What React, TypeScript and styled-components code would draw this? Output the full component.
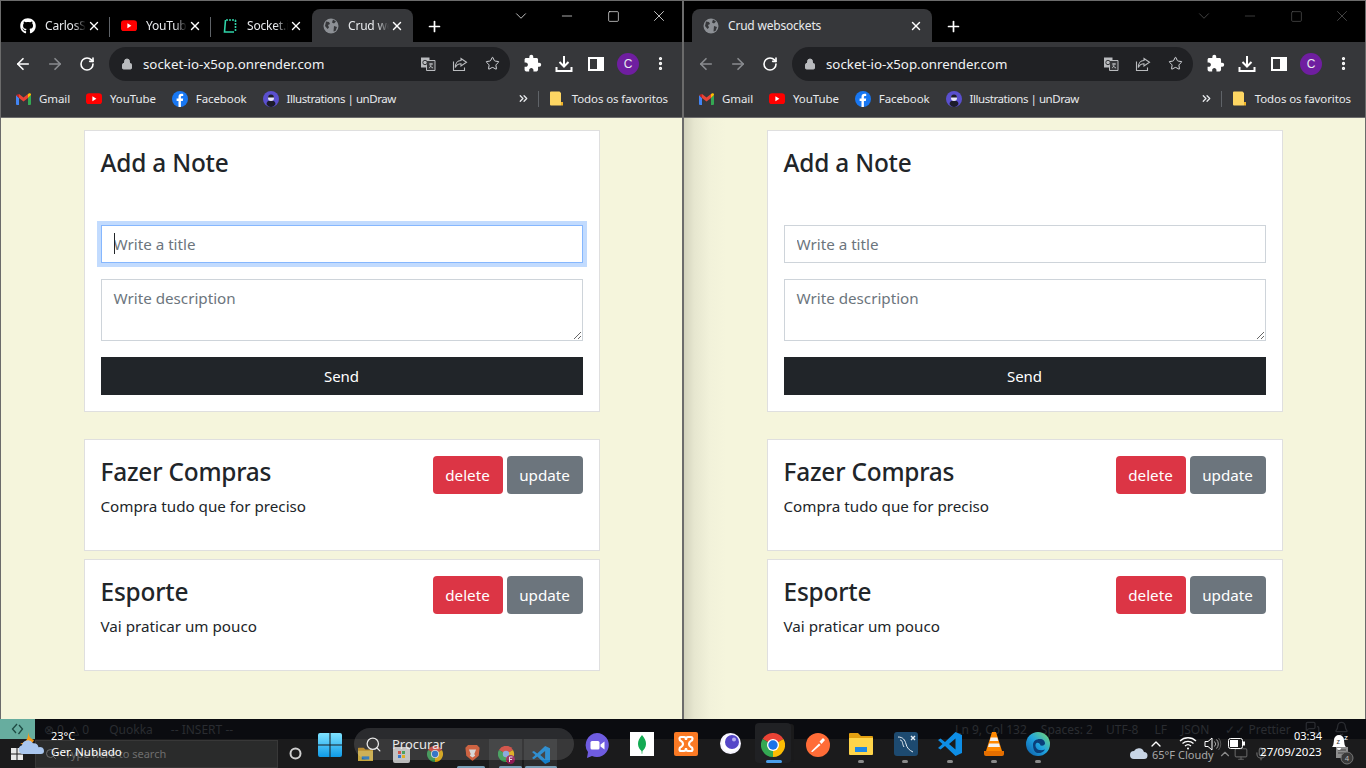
import React from "react";
import styled, { createGlobalStyle } from "styled-components";
import { FaGithub } from "react-icons/fa";
import { MdExtension } from "react-icons/md";
import { Star, Lock, ArrowLeft, ArrowRight, RotateCw, Plus, X, Minus, Square, ChevronDown, EllipsisVertical, ChevronsRight, Search, ChevronUp, Bell as BellLine, MessagesSquare, Mic, Monitor } from "lucide-react";

const UI = `"Noto Sans", "Open Sans", "Liberation Sans", sans-serif`;

const Global = createGlobalStyle`
  html, body { margin: 0; padding: 0; width: 1366px; height: 768px; overflow: hidden; background: #000; font-family: ${UI}; }
  * { box-sizing: border-box; }
`;

const Page = styled.div`display: flex; flex-direction: column; width: 1366px; height: 768px;`;
const Windows = styled.div`display: grid; grid-template-columns: 683px 683px; height: 719px;`;
const Win = styled.section`display: flex; flex-direction: column; border: 1px solid #6b6b6b; border-bottom: 0; min-width: 0;`;

const TabStrip = styled.div`display: flex; align-items: flex-end; height: 41px; padding-left: 8px; background: #000; position: relative;`;
const Tab = styled.div<{ $active?: boolean; $w: number; $sep?: boolean }>`
  position: relative; display: flex; align-items: center; width: ${p => p.$w}px; height: 33px; padding-left: 11px; color: #e8eaed;
  background: ${p => p.$active ? "#36373a" : "transparent"}; border-radius: 8px 8px 0 0; font-size: 12px;
  ${p => p.$sep ? `&::after { content: ""; position: absolute; right: 0; top: 8px; height: 20px; width: 1px; background: #5f6368; }` : ""}
`;
const Fav = styled.span`display: flex; width: 16px; height: 16px; flex: none; align-items: center; justify-content: center;`;
const TabTitle = styled.span`flex: 1; margin-left: 9px; overflow: hidden; white-space: nowrap; letter-spacing: -0.2px;
  ${(p: { $fade?: boolean }) => p.$fade ? "-webkit-mask-image: linear-gradient(90deg,#000 70%,transparent 100%);" : ""}`;
const TabClose = styled.span`display: flex; width: 16px; margin-right: 8px; justify-content: center; color: #fff;`;
const NewTab = styled.span`display: flex; align-self: center; margin: 9px 0 0 13px; color: #fff;`;
const Controls = styled.div<{ $dim?: boolean }>`
  position: absolute; top: 0; right: 0; display: flex; height: 30px; color: ${p => p.$dim ? "#585858" : "#fff"};
`;
const Ctl = styled.span`display: flex; width: 46px; height: 30px; align-items: center; justify-content: center;`;

const Toolbar = styled.div`display: flex; align-items: center; height: 43px; padding: 0 6px; background: #36373a;`;
const Btn = styled.span<{ $c?: string }>`display: flex; flex: none; width: 32px; height: 32px; align-items: center; justify-content: center; color: ${p => p.$c || "#fff"};`;
const Omni = styled.div`display: flex; align-items: center; flex: none; width: 401px; height: 34px; margin: 0 6px 0 6px; padding: 0 2px 0 12px; border-radius: 17px; background: #202124;`;
const Url = styled.span`flex: 1; margin-left: 10px; font-size: 13.3px; color: #f1f3f4; white-space: nowrap;`;
const Avatar = styled.span`display: flex; width: 22px; height: 22px; border-radius: 50%; align-items: center; justify-content: center; background: #6f1ea0; color: #e8eaed; font: 12px "Liberation Sans", sans-serif;`;

const Bookmarks = styled.div`display: flex; align-items: center; height: 33px; padding: 0 14px 5px 15px; background: #36373a; border-bottom: 1px solid #6b6b6b; font-size: 11.5px; color: #e8eaed; letter-spacing: -0.1px;`;
const Bm = styled.span<{ $gap?: number; $mr?: number; $ls?: number }>`display: flex; align-items: center; gap: ${p => p.$gap ?? 8}px; margin-right: ${p => p.$mr ?? 16}px; white-space: nowrap;
  ${p => p.$ls !== undefined ? `letter-spacing: ${p.$ls}px;` : ""}`;
const BmRight = styled.span`display: flex; align-items: center; margin-left: auto;`;
const BmSep = styled.span`width: 1px; height: 16px; margin: 0 11px 0 8px; background: #5f6368;`;

const Content = styled.main<{ $shade?: boolean }>`
  flex: 1; padding-top: 12px; 
  background: ${p => p.$shade ? "linear-gradient(90deg,#d2d2bc 0,#e6e6cf 10px,#f2f2da 26px,#f5f5dc 42px)" : "#f5f5dc"};
`;
const Column = styled.div`width: 516px; margin: 0 auto;`;
const Card = styled.div<{ $mb?: number }>`background: #fff; border: 1px solid #dfdfdf; padding: 16px; margin-bottom: ${p => p.$mb ?? 8}px; color: #212529;`;
const H = styled.h3<{ $mb?: number }>`margin: 0 0 ${p => p.$mb ?? 0}px; font: 500 24.4px/32px ${UI}; letter-spacing: -0.2px; color: #212529;`;
const FieldWrap = styled.div`position: relative; margin-bottom: 16px; &[data-caret]::after { content: ""; position: absolute; left: 13px; top: 8px; width: 1px; height: 21px; background: #212529; }`;
const field = `display: block; width: 100%; border: 1px solid #ced4da; border-radius: 0; padding: 6px 12px; background: #fff; font: 400 15.2px/24px ${UI}; color: #212529; outline: none;
  &::placeholder { color: #6c757d; opacity: 1; }`;
const TitleInput = styled.input<{ $focus?: boolean }>`${field} height: 38px;
  ${p => p.$focus ? "border-color: #86b7fe; box-shadow: 0 0 0 4px #c2dbfe;" : ""}`;
const DescArea = styled.textarea`${field} height: 62px; resize: vertical;`;
const Send = styled.button`display: block; width: 100%; height: 38px; border: 0; border-radius: 0; background: #212529; color: #fff; font: 400 15px ${UI};`;
const NoteHead = styled.div`display: flex; justify-content: space-between; align-items: flex-start; height: 38px;`;
const NoteBtns = styled.div`display: flex; gap: 4px;`;
const Act = styled.button<{ $bg: string; $w: number }>`width: ${p => p.$w}px; height: 38px; border: 0; border-radius: 4px; background: ${p => p.$bg}; color: #fff; font: 400 15.2px ${UI}; padding: 0;`;
const Desc = styled.p`margin: 0 0 16px; font: 400 15.2px/24px ${UI}; color: #212529;`;

const Taskbar = styled.footer`position: relative; height: 49px; background: #0b0c10; overflow: hidden; color: #fff;`;
const GhostStatus = styled.div`display: flex; align-items: center; height: 20px; font-size: 12px; color: #2a2c31; white-space: nowrap;`;
const GhostRemote = styled.span`display: flex; width: 35px; height: 20px; align-items: center; justify-content: center; background: #67ad9f; margin-right: 9px;`;
const GhostItem = styled.span<{ $ml?: number }>`display: flex; gap: 3px; align-items: center; margin-left: ${p => p.$ml ?? 0}px;`;
const GhostBar = styled.div`position: relative; display: flex; align-items: center; height: 29px; background: #1b1b1c;`;
const GhostSearch = styled.span`display: flex; align-items: center; gap: 8px; width: 243px; height: 28px; margin-left: 35px; padding-left: 9px; background: #2a2b2b; border: 1px solid #383838; color: #6e6e6e; font-size: 11px;`;
const Float = styled.div<{ $x: number; $y: number; $o?: number }>`position: absolute; left: ${p => p.$x}px; top: ${p => p.$y}px; display: flex; opacity: ${p => p.$o ?? 1};`;
const FloatText = styled(Float)<{ $s?: number; $c?: string }>`font-size: ${p => p.$s ?? 11}px; color: ${p => p.$c ?? "#fff"}; white-space: nowrap; line-height: 14px;`;
const GhostTile = styled(Float)`width: 33px; height: 29px; background: #2b2c2d;`;
const Pill = styled(Float)`width: 220px; height: 32px; border-radius: 16px; background: rgba(255,255,255,.13); align-items: center; padding-left: 11px; gap: 10px; color: #e9e9e9; font-size: 13px;`;
const ActiveTile = styled(Float)`width: 36px; height: 40px; border-radius: 4px; background: #202124; box-shadow: 4px 0 0 -1px #1a1a1b;`;
const Dot = styled(Float)<{ $w?: number; $c?: string }>`width: ${p => p.$w ?? 6}px; height: 3px; border-radius: 2px; background: ${p => p.$c ?? "#8a8a8a"};`;

const YT = ({ w = 16 }: { w?: number }) => (
  <svg width={w} height={w * 0.72} viewBox="0 0 20 14"><rect width="20" height="14" rx="4" fill="#f00" /><path d="M8 4l5 3-5 3z" fill="#fff" /></svg>
);
const Gmail = () => (
  <svg width="15" height="12" viewBox="0 0 15 12"><path d="M0 2v9a1 1 0 0 0 1 1h2V5z" fill="#4285f4" /><path d="M12 12h2a1 1 0 0 0 1-1V2l-3 3z" fill="#34a853" /><path d="M3 5V1L0 2z" fill="#c5221f" /><path d="M3 1v4l4.5 3.4L12 5V1L7.5 4.4z" fill="#ea4335" /><path d="M12 1v4l3-3V1.5C15 .4 13.6-.2 12.8.4z" fill="#fbbc04" /></svg>
);
const FB = () => (
  <svg width="16" height="16" viewBox="0 0 16 16"><circle cx="8" cy="8" r="8" fill="#1877f2" /><path d="M8.9 16V9.9h1.9l.4-2.3H8.9V6.2c0-.7.3-1.2 1.3-1.2h1V3c-.5-.1-1.1-.2-1.7-.2-1.9 0-3 1.1-3 3.2v1.600H4.600v2.300h1.900V16z" fill="#fff" /></svg>
);
const Undraw = () => (
  <svg width="16" height="16" viewBox="0 0 16 16"><circle cx="8" cy="8" r="8" fill="#5a4fcf" /><path d="M3.500 13c0-2.500 2-3.500 4.500-3.500s4.500 1 4.500 3.500c-1 1.800-2.800 3-4.500 3s-3.500-1.200-4.500-3z" fill="#1c1c2b" /><circle cx="8" cy="7" r="3" fill="#e8e6f8" /><path d="M5 6.500a3 3 0 0 1 6 0z" fill="#1c1c2b" /></svg>
);
const Folder = () => (
  <svg width="13" height="16" viewBox="0 0 13 16"><path d="M0 1.500A1 1 0 0 1 1 .5h8.500L11 2v12.500H1a1 1 0 0 1-1-1z" fill="#fdd663" /><path d="M11 11h2v3.500h-2z" fill="#f0b429" /></svg>
);
const Globe = () => (
  <svg width="16" height="16" viewBox="0 0 16 16"><circle cx="8" cy="8" r="7.500" fill="#8d9095" /><path d="M3 3.500l3 .5 1 2-2 1 1 2.500-1.500 1.500L2 8zM10 1.500l3 2-2 2-2-1zM11 8l3 1-1.500 4-2 .5z" fill="#36373a" /></svg>
);
const SocketFav = () => (
  <svg width="16" height="16" viewBox="0 0 16 16" fill="none" stroke="#2fd3a8" strokeWidth="1.600"><path d="M4 2h9.500" strokeDasharray="2 1" /><path d="M13.500 2v12" strokeDasharray="2 1" /><path d="M12 14H2.500l1-12" /></svg>
);
const Translate = () => (
  <svg width="16" height="16" viewBox="0 0 16 16"><path d="M1 1.500h8.500v10H1z" fill="#b9bbbe" /><path d="M6.500 4.500h8.500v10H6.500z" fill="#36373a" stroke="#b9bbbe" /><circle cx="5" cy="6.500" r="2.200" fill="none" stroke="#36373a" /><path d="M9 8h4M11 7v1c0 2-1 3.500-2 4M10 9.500c.7 1.300 1.600 2 3 2.500" stroke="#b9bbbe" fill="none" /></svg>
);
const Share = () => (
  <svg width="16" height="16" viewBox="0 0 16 16" fill="none" stroke="#b9bbbe" strokeWidth="1.100"><path d="M9 2.500l5.500 3.800L9 10V7.800C6 7.800 4.500 9 3.300 11.500c0-4 2-7 5.700-7z" /><path d="M1.500 5.500v9h11v-3" /></svg>
);
const Download = () => (
  <svg width="18" height="18" viewBox="0 0 18 18" fill="none" stroke="#fff" strokeWidth="2"><path d="M9 1v10M4.500 7l4.500 4.500L13.500 7" /><path d="M1.500 12v4h15v-4" /></svg>
);
const SidePanel = () => (
  <svg width="16" height="14" viewBox="0 0 16 14"><path d="M0 0h16v14H0z" fill="#fff" /><path d="M2 2h7v10H2z" fill="#36373a" /></svg>
);
const WinLogo = () => (
  <svg width="24" height="24" viewBox="0 0 24 24"><defs><linearGradient id="wl" x1="0" y1="0" x2="0" y2="1"><stop offset="0" stopColor="#7fe3ff" /><stop offset="1" stopColor="#0f9be8" /></linearGradient></defs><path d="M2 0h9.500v11.500H0V2a2 2 0 0 1 2-2zM12.500 0H22a2 2 0 0 1 2 2v9.500H12.500zM0 12.500h11.500V24H2a2 2 0 0 1-2-2zM12.500 12.500H24V22a2 2 0 0 1-2 2h-9.500z" fill="url(#wl)" /></svg>
);
const ChromeIcon = ({ s = 24 }: { s?: number }) => (
  <svg width={s} height={s} viewBox="0 0 24 24"><path d="M12 12L1.600 6A12 12 0 0 1 22.400 6z" fill="#ea4335" /><path d="M12 12L22.400 6A12 12 0 0 1 12 24z" fill="#fbbc04" /><path d="M12 12L12 24A12 12 0 0 1 1.600 6z" fill="#34a853" /><circle cx="12" cy="12" r="6" fill="#fff" /><circle cx="12" cy="12" r="4.700" fill="#1a73e8" /></svg>
);
const ChromeBadge = () => (
  <svg width="17" height="18" viewBox="0 0 17 18"><path d="M8 8L1 4A8 8 0 0 1 15 4z" fill="#ea4335" /><path d="M8 8L15 4A8 8 0 0 1 8 16z" fill="#fbbc04" /><path d="M8 8L8 16A8 8 0 0 1 1 4z" fill="#34a853" /><circle cx="8" cy="8" r="3.200" fill="#8ab4f8" /><circle cx="12.500" cy="13.500" r="4.500" fill="#a0195c" /><path d="M11.500 16v-5h3M11.500 13.500h2.500" stroke="#fff" strokeWidth="1" fill="none" /></svg>
);
const Meet = () => (
  <svg width="24" height="25" viewBox="0 0 24 25"><path d="M12 0a12 12 0 1 1-5 23l-5 2 1-6A12 12 0 0 1 12 0z" fill="#6f5ce0" /><rect x="5.500" y="8" width="9" height="8.500" rx="1.500" fill="#fff" /><path d="M15.500 11.500l4-3v8l-4-3z" fill="#fff" /></svg>
);
const Mongo = () => (
  <svg width="24" height="24" viewBox="0 0 24 24"><path d="M0 0h24v24H0z" fill="#fff" /><path d="M12 3c3 3.500 4 6 4 9 0 3.500-2 5.500-3.500 7l-.3 3h-.4l-.3-3C10 17.500 8 15.500 8 12c0-3 1-5.500 4-9z" fill="#13aa52" /></svg>
);
const Xampp = () => (
  <svg width="24" height="24" viewBox="0 0 24 24"><rect width="24" height="24" rx="2" fill="#fb7a24" /><path d="M7 5h3c2 0 2 3 2 3s0-3 2-3h3c2 0 2 3.500 0 4-1 .5-2 1.500-2 3s1 2.500 2 3c2 .5 2 4 0 4h-3c-2 0-2-3-2-3s0 3-2 3H7c-2 0-2-3.500 0-4 1-.5 2-1.500 2-3s-1-2.500-2-3c-2-.5-2-4 0-4z" fill="none" stroke="#fff" strokeWidth="2.200" /></svg>
);
const Orb = () => (
  <svg width="21" height="21" viewBox="0 0 21 21"><circle cx="10.500" cy="10.500" r="10.500" fill="#f6f4ff" /><circle cx="10.500" cy="10.500" r="8.500" fill="#fff" /><circle cx="12" cy="9" r="7" fill="#5546c8" /><circle cx="14" cy="6.500" r="2" fill="#b7aef0" /></svg>
);
const Postman = () => (
  <svg width="24" height="24" viewBox="0 0 24 24"><circle cx="12" cy="12" r="12" fill="#ff6c37" /><path d="M5 18.500l8-8 1.500 1.500-8 7z M13.500 8.500l3.500-3.500 2 2-3.500 4z" fill="#fff" /></svg>
);
const FolderApp = ({ s = 24 }: { s?: number }) => (
  <svg width={s} height={s * 23 / 24} viewBox="0 0 24 23"><path d="M0 2a1 1 0 0 1 1-1h8l3 3h11a1 1 0 0 1 1 1v3H0z" fill="#e3a010" /><path d="M0 6h24v16a1 1 0 0 1-1 1H1a1 1 0 0 1-1-1z" fill="#ffd54a" /><path d="M6 15h12v5H6z" fill="#1e88e5" /></svg>
);
const MySql = () => (
  <svg width="24" height="24" viewBox="0 0 24 24"><rect width="24" height="24" rx="3" fill="#1d4a70" /><path d="M4 5c5 0 7 3 8 7s3 6 7 8M6 8c3 0 2 4 4 7" fill="none" stroke="#e6eef5" strokeWidth="1" /><path d="M17 4l4 4M21 4l-4 4" stroke="#e6eef5" strokeWidth="1.400" /></svg>
);
const VsCode = ({ s = 24 }: { s?: number }) => (
  <svg width={s} height={s} viewBox="0 0 24 24"><path d="M17.500 0L24 3v18l-6.500 3L7 14l-4.500 3.500L0 16l4.500-4L0 8l2.500-1.500L7 10zM17.500 6.500L11 12l6.500 5.500z" fill="#0e8ee6" /></svg>
);
const Vlc = () => (
  <svg width="20" height="24" viewBox="0 0 20 24"><path d="M8 0h4l6 19H2z" fill="#ff8800" /><path d="M6.700 5.500h6.600l1 3.500H5.700z" fill="#f3f3f3" /><path d="M5 11.500h10l1 3.500H4z" fill="#f3f3f3" /><path d="M0 19h20v3a2 2 0 0 1-2 2H2a2 2 0 0 1-2-2z" fill="#e56f00" /></svg>
);
const Edge = ({ s = 24 }: { s?: number }) => (
  <svg width={s} height={s} viewBox="0 0 24 24"><defs><linearGradient id="eg" x1="0" y1="1" x2="1" y2="0"><stop offset="0" stopColor="#0c59a4" /><stop offset=".5" stopColor="#1fa3e0" /><stop offset="1" stopColor="#7ddc6a" /></linearGradient></defs><circle cx="12" cy="12" r="12" fill="url(#eg)" /><path d="M7 13c0-4 3-6 7-6 3 0 5 2 5 4.500 0 1.500-2 2.500-4.500 2-.5-2-2-3-4-2.500C9 12 9 15 11 17c2 1.500 5 1.500 8 .5-2 3-5 4-8 3.500C8.500 20 7 17 7 13z" fill="#0a3f7a" /></svg>
);
const Weather = () => (
  <svg width="27" height="23" viewBox="0 0 27 23"><path d="M10 0c1 5 3 7 6 8-2 5-10 7-14 3 3 1 9-2 8-11z" fill="#f59a1a" /><path d="M5 22a4.500 4.500 0 0 1-1-8.800 6 6 0 0 1 11-2 5 5 0 0 1 5.500 4A4 4 0 0 1 26 19c0 2-1 3-3 3z" fill="#a9c6ee" /></svg>
);
const Cloud = () => (
  <svg width="18" height="12" viewBox="0 0 18 12"><path d="M4 12a4 4 0 0 1 0-8 5.500 5.500 0 0 1 10 1 3.500 3.500 0 0 1 0 7z" fill="#c7d4e4" /></svg>
);
const Wifi = () => (
  <svg width="18" height="14" viewBox="0 0 18 14" fill="none" stroke="#fff" strokeWidth="1.300"><path d="M1 5a11.500 11.500 0 0 1 16 0M3.500 7.500a8 8 0 0 1 11 0M6 10a4.500 4.500 0 0 1 6 0" /><circle cx="9" cy="12.500" r="1" fill="#fff" stroke="none" /></svg>
);
const Speaker = () => (
  <svg width="18" height="14" viewBox="0 0 18 14" fill="none" stroke="#fff" strokeWidth="1"><path d="M1 4.500h3L8 1v12L4 9.500H1z" /><path d="M10.500 4.500a3.500 3.500 0 0 1 0 5M12.500 2.500a6.500 6.500 0 0 1 0 9" stroke="#a8a8a8" /><path d="M14.500 1a9 9 0 0 1 0 12" stroke="#555" /></svg>
);
const Battery = () => (
  <svg width="17" height="11" viewBox="0 0 17 11"><rect x=".5" y=".5" width="14" height="10" rx="2" fill="none" stroke="#fff" /><rect x="2" y="2" width="8" height="7" fill="#fff" /><rect x="15" y="3.500" width="2" height="4" fill="#fff" /></svg>
);
const Bell = () => (
  <svg width="20" height="18" viewBox="0 0 20 18"><path d="M1 14c1.500-1.500 1.500-3 2-7a5 5 0 0 1 10 0c.5 4 .5 5.500 2 7z" fill="#fff" /><path d="M6 15a2 2 0 0 0 4 0z" fill="#fff" /><text x="13" y="7" fontSize="8" fill="#fff" fontFamily="Liberation Sans">z</text><text x="5.500" y="11" fontSize="7" fill="#333" fontFamily="Liberation Sans">z</text></svg>
);
const Store = () => (
  <svg width="17" height="16" viewBox="0 0 17 16"><rect width="17" height="16" rx="2" fill="#d6d6d6" /><path d="M5 4h3v3H5z" fill="#ea4335" /><path d="M9 4h3v3H9z" fill="#34a853" /><path d="M5 8h3v3H5z" fill="#1a73e8" /><path d="M9 8h3v3H9z" fill="#fbbc04" /></svg>
);
const Brave = () => (
  <svg width="15" height="16" viewBox="0 0 16 18"><path d="M3 0h10l3 3-1 9-7 6-7-6-1-9z" fill="#f1592a" /><path d="M4 5h8l-2 5 1 2-3 2-3-2 1-2z" fill="#fff" /></svg>
);
const Remote = () => (
  <svg width="13" height="12" viewBox="0 0 13 12" fill="none" stroke="#1d4a42" strokeWidth="1.300"><path d="M6 1L1.500 6 5 10" /><path d="M7.500 11L11.500 6 8 2" /></svg>
);
const Notes = () => (
  <svg width="24" height="22" viewBox="0 0 24 22"><path d="M0 3h12v11H0z" fill="#8e8e8e" /><path d="M2 6h8M2 9h8" stroke="#444" /><circle cx="11" cy="14" r="6" fill="#3a3a3a" stroke="#777" /><text x="8.800" y="17" fontSize="8" fill="#bbb" fontFamily="Liberation Sans">4</text></svg>
);

const tabs = [
  { t: "CarlosSouza", i: <FaGithub size={16} color="#fff" /> },
  { t: "YouTube", i: <YT /> },
  { t: "Socket.io", i: <SocketFav /> },
  { t: "Crud websockets", i: <Globe />, active: true },
];

function Browser({ split }: { split: boolean }) {
  const shown = split ? tabs : tabs.slice(3);
  return (
    <Win>
      <TabStrip>
        {shown.map((t, i) => (
          <Tab key={t.t} $w={split ? 101 : 240} $active={t.active} $sep={!t.active && i < 2}>
            <Fav>{t.i}</Fav>
            <TabTitle $fade={split}>{t.t}</TabTitle>
            <TabClose><X size={14} strokeWidth={2.4} /></TabClose>
          </Tab>
        ))}
        <NewTab><Plus size={17} strokeWidth={2.4} /></NewTab>
        <Controls $dim={!split}>
          <Ctl><ChevronDown size={18} strokeWidth={1} /></Ctl>
          <Ctl><Minus size={16} strokeWidth={1} /></Ctl>
          <Ctl><Square size={13} strokeWidth={1.200} /></Ctl>
          <Ctl><X size={18} strokeWidth={1} /></Ctl>
        </Controls>
      </TabStrip>
      <Toolbar>
        <Btn $c={split ? "#fff" : "#8a8c90"}><ArrowLeft size={18} strokeWidth={2.2} /></Btn>
        <Btn $c="#8a8c90"><ArrowRight size={18} strokeWidth={2.2} /></Btn>
        <Btn><RotateCw size={16} strokeWidth={2.4} /></Btn>
        <Omni>
          <Lock size={12} color="#b9bbbe" fill="#b9bbbe" strokeWidth={2} />
          <Url>socket-io-x5op.onrender.com</Url>
          <Btn><Translate /></Btn>
          <Btn><Share /></Btn>
          <Btn><Star size={15} color="#dfe1e5" strokeWidth={1.500} /></Btn>
        </Omni>
        <Btn><MdExtension size={19} /></Btn>
        <Btn><Download /></Btn>
        <Btn><SidePanel /></Btn>
        <Btn><Avatar>C</Avatar></Btn>
        <Btn><EllipsisVertical size={17} strokeWidth={2.6} /></Btn>
      </Toolbar>
      <Bookmarks>
        <Bm><Gmail />Gmail</Bm>
        <Bm><YT />YouTube</Bm>
        <Bm><FB />Facebook</Bm>
        <Bm $ls={-0.45}><Undraw />Illustrations | unDraw</Bm>
        <BmRight>
          <ChevronsRight size={13} strokeWidth={2.4} />
          <BmSep />
          <Bm $gap={9} $mr={0}><Folder />Todos os favoritos</Bm>
        </BmRight>
      </Bookmarks>
      <Content $shade={!split}>
        <Column>
          <Card $mb={27}>
            <H $mb={46}>Add a Note</H>
            <FieldWrap data-caret={split ? "" : undefined}>
              <TitleInput $focus={split} placeholder="Write a title" readOnly />
            </FieldWrap>
            <FieldWrap>
              <DescArea placeholder="Write description" readOnly />
            </FieldWrap>
            <Send>Send</Send>
          </Card>
          {[["Fazer Compras", "Compra tudo que for preciso"], ["Esporte", "Vai praticar um pouco"]].map(([t, d]) => (
            <Card key={t}>
              <NoteHead>
                <H>{t}</H>
                <NoteBtns>
                  <Act $bg="#dc3545" $w={70}>delete</Act>
                  <Act $bg="#6c757d" $w={76}>update</Act>
                </NoteBtns>
              </NoteHead>
              <Desc>{d}</Desc>
            </Card>
          ))}
        </Column>
      </Content>
    </Win>
  );
}

const apps: [number, number, React.ReactNode][] = [
  [585, 14, <Meet />], [630, 13, <Mongo />], [674, 13, <Xampp />], [720, 14, <Orb />], [761, 14, <ChromeIcon />], [806, 14, <Postman />],
  [849, 13, <FolderApp />], [894, 13, <MySql />], [938, 13, <VsCode />], [984, 13, <Vlc />], [1026, 13, <Edge />],
];

export default function App() {
  return (
    <Page>
      <Global />
      <Windows>
        <Browser split />
        <Browser split={false} />
      </Windows>
      <Taskbar>
        <GhostStatus>
          <GhostRemote><Remote /></GhostRemote>
          <GhostItem>⊗ 0&nbsp; △ 0</GhostItem>
          <GhostItem $ml={20}>Quokka</GhostItem>
          <GhostItem $ml={18}>-- INSERT --</GhostItem>
          <GhostItem $ml={722}>Ln 9, Col 132</GhostItem>
          <GhostItem $ml={14}>Spaces: 2</GhostItem>
          <GhostItem $ml={13}>UTF-8</GhostItem>
          <GhostItem $ml={16}>LF</GhostItem>
          <GhostItem $ml={14}>JSON</GhostItem>
          <GhostItem $ml={16}>✓✓ Prettier</GhostItem>
        </GhostStatus>
        <GhostBar>
          <GhostSearch><Search size={12} />Type here to search</GhostSearch>
        </GhostBar>

        <GhostTile $x={489} $y={20} />
        <GhostTile $x={524} $y={20} />
        <Dot $x={457} $y={47} $w={28} $c="#7aa0b8" />
        <Dot $x={499} $y={47} $w={23} $c="#7aa0b8" />
        <Dot $x={525} $y={47} $w={32} $c="#7aa0b8" />
        <Float $x={11} $y={29}><svg width="12" height="12" viewBox="0 0 12 12"><path d="M0 0h5.500v5.500H0zM6.500 0H12v5.500H6.500zM0 6.500h5.500V12H0zM6.500 6.500H12V12H6.500z" fill="#e8e8e8" /></svg></Float>
        <Float $x={289} $y={28}><svg width="13" height="13" viewBox="0 0 13 13"><circle cx="6.500" cy="6.500" r="5" fill="none" stroke="#cfcfcf" strokeWidth="2" /></svg></Float>
        <Float $x={358} $y={28} $o={0.75}><FolderApp s={15} /></Float>
        <Float $x={393} $y={28} $o={0.85}><Store /></Float>
        <Float $x={427} $y={27} $o={0.8}><ChromeIcon s={16} /></Float>
        <Float $x={465} $y={26} $o={0.8}><Brave /></Float>
        <Float $x={498} $y={27} $o={0.85}><ChromeBadge /></Float>
        <Float $x={532} $y={27} $o={0.85}><VsCode s={18} /></Float>

        <Float $x={18} $y={13}><Weather /></Float>
        <FloatText $x={51} $y={10}>23°C</FloatText>
        <FloatText $x={51} $y={26} $s={11.6}>Ger. Nublado</FloatText>

        <Float $x={318} $y={14}><WinLogo /></Float>
        <Pill $x={354} $y={9}><Search size={17} strokeWidth={1.800} /><span>Procurar</span></Pill>

        <ActiveTile $x={755} $y={4} />
        {apps.map(([x, y, n], i) => (
          <Float key={i} $x={x} $y={y}>{n}</Float>
        ))}
        <Dot $x={766} $y={41} $w={16} $c="#4a9eea" />
        {[861, 905, 950, 994, 1038].map(x => <Dot key={x} $x={x - 3} $y={41} />)}

        <Float $x={1130} $y={28}><Cloud /></Float>
        <FloatText $x={1152} $y={29} $c="#a8a8a8">65°F</FloatText>
        <FloatText $x={1178} $y={29} $c="#a8a8a8">Cloudy</FloatText>
        <Float $x={1218} $y={28}><ChevronUp size={14} color="#8a8a8a" /></Float>
        <Float $x={1234} $y={28} $o={0.6}><Monitor size={14} color="#8a8a8a" /></Float>
        <Float $x={1254} $y={28} $o={0.7}><Mic size={14} color="#8a8a8a" /></Float>
        <Float $x={1305} $y={2}><MessagesSquare size={15} color="#2a2c31" /></Float>
        <Float $x={1334} $y={2}><BellLine size={15} color="#2a2c31" /></Float>
        <Float $x={1336} $y={25}><Notes /></Float>
        <Float $x={1148} $y={17}><ChevronUp size={16} strokeWidth={2} /></Float>
        <Float $x={1179} $y={17}><Wifi /></Float>
        <Float $x={1204} $y={18}><Speaker /></Float>
        <Float $x={1228} $y={19}><Battery /></Float>
        <FloatText $x={1294} $y={10}>03:34</FloatText>
        <FloatText $x={1260} $y={26} $s={11.6}>27/09/2023</FloatText>
        <Float $x={1331} $y={14}><Bell /></Float>
      </Taskbar>
    </Page>
  );
}
